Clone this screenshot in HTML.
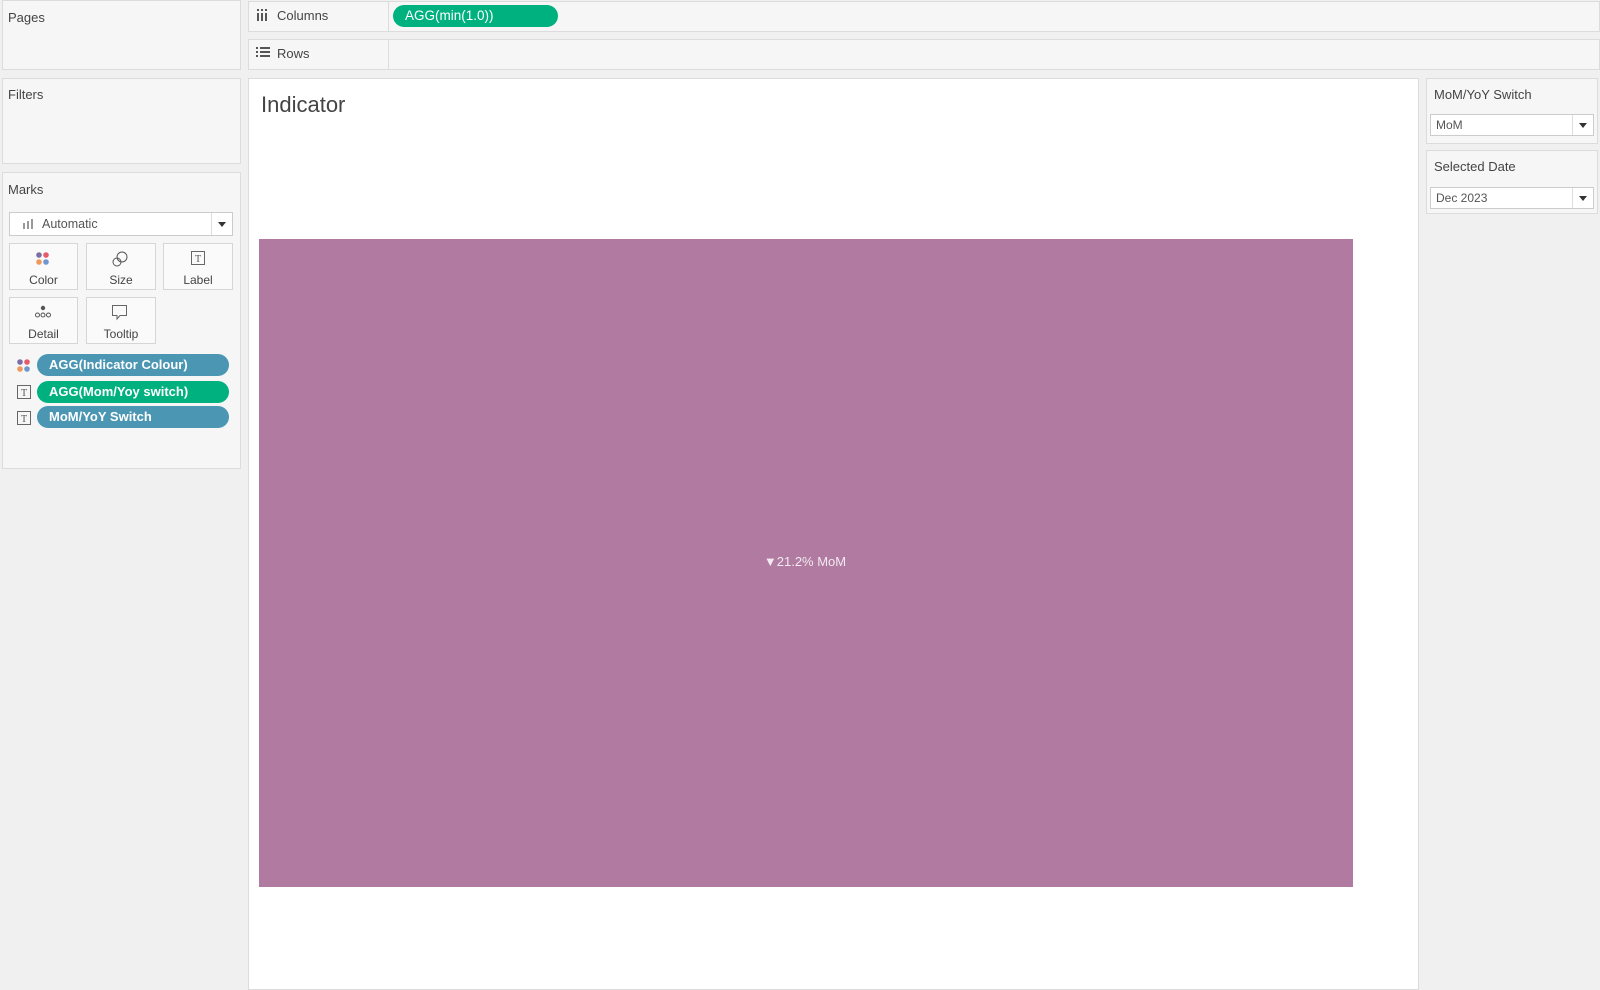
<!DOCTYPE html>
<html><head><style>
*{box-sizing:border-box;margin:0;padding:0}
body{width:1600px;height:988px;background:#f0f0f0;font-family:"Liberation Sans",sans-serif;color:#333;position:relative;overflow:hidden;font-size:13px}
.p{position:absolute;background:#f6f6f6;border:1px solid #dcdcdc}
.t{position:absolute;font-size:13px;color:#444}
.pill{position:absolute;border-radius:11px;color:#fff;font-weight:bold;font-size:13px;padding-left:12px;line-height:22px}
.btn{position:absolute;background:#fafafa;border:1px solid #d6d6d6;text-align:center;font-size:12px;color:#444}
.dd{position:absolute;background:#fff;border:1px solid #ccc;font-size:12px;color:#555;padding-left:5px;line-height:20px}
.dd:after{content:"";position:absolute;right:0;top:0;width:20px;height:100%;border-left:1px solid #ddd}
.arr{position:absolute;right:6px;top:8px;width:0;height:0;border-left:4px solid transparent;border-right:4px solid transparent;border-top:5px solid #333}
</style></head><body>
<div class="p" style="left:2px;top:0;width:239px;height:70px"></div>
<div class="t" style="left:8px;top:10px">Pages</div>
<div class="p" style="left:2px;top:78px;width:239px;height:86px"></div>
<div class="t" style="left:8px;top:87px">Filters</div>
<div class="p" style="left:2px;top:172px;width:239px;height:297px"></div>
<div class="t" style="left:8px;top:182px">Marks</div>
<div class="dd" style="left:9px;top:212px;width:224px;height:24px;line-height:22px;padding-left:32px;font-size:12.5px">Automatic<span class="arr" style="top:9px"></span></div>
<svg style="position:absolute;left:22px;top:218px" width="12" height="12"><rect x="1" y="5" width="2" height="6" fill="#999"/><rect x="5" y="3" width="2" height="8" fill="#999"/><rect x="9" y="1" width="2" height="10" fill="#999"/></svg>
<div class="btn" style="left:9px;top:243px;width:69px;height:47px;padding-top:29px">Color</div>
<svg style="position:absolute;left:35px;top:251px" width="16" height="16"><circle cx="4" cy="4" r="2.8" fill="#7b6ea6"/><circle cx="11" cy="4" r="2.8" fill="#e55b6a"/><circle cx="4" cy="11" r="2.8" fill="#f09a5a"/><circle cx="11" cy="11" r="2.8" fill="#6f96cf"/></svg>
<div class="btn" style="left:86px;top:243px;width:70px;height:47px;padding-top:29px">Size</div>
<svg style="position:absolute;left:111px;top:250px" width="18" height="18"><circle cx="11" cy="7" r="5" fill="none" stroke="#555"/><circle cx="6" cy="12" r="4" fill="none" stroke="#555"/></svg>
<div class="btn" style="left:163px;top:243px;width:70px;height:47px;padding-top:29px">Label</div>
<svg style="position:absolute;left:190px;top:250px" width="16" height="16"><rect x="1.5" y="1.5" width="13" height="13" fill="none" stroke="#666"/><text x="8" y="12" font-size="10" text-anchor="middle" fill="#555" font-family="Liberation Serif">T</text></svg>
<div class="btn" style="left:9px;top:297px;width:69px;height:47px;padding-top:29px">Detail</div>
<svg style="position:absolute;left:34px;top:305px" width="18" height="14"><circle cx="9" cy="3" r="2.2" fill="#555"/><circle cx="3.5" cy="10" r="2" fill="none" stroke="#555"/><circle cx="9" cy="10" r="2" fill="none" stroke="#555"/><circle cx="14.5" cy="10" r="2" fill="none" stroke="#555"/></svg>
<div class="btn" style="left:86px;top:297px;width:70px;height:47px;padding-top:29px">Tooltip</div>
<svg style="position:absolute;left:111px;top:304px" width="18" height="18"><path d="M1.5 1.5H15.5V11.5H9L6 15V11.5H1.5Z" fill="none" stroke="#666"/></svg>
<svg style="position:absolute;left:16px;top:358px" width="16" height="16"><circle cx="4" cy="4" r="2.8" fill="#7b6ea6"/><circle cx="11" cy="4" r="2.8" fill="#e55b6a"/><circle cx="4" cy="11" r="2.8" fill="#f09a5a"/><circle cx="11" cy="11" r="2.8" fill="#6f96cf"/></svg>
<div class="pill" style="left:37px;top:354px;width:192px;background:#4a96b3">AGG(Indicator Colour)</div>
<svg style="position:absolute;left:16px;top:384px" width="16" height="16"><rect x="1.5" y="1.5" width="13" height="13" fill="none" stroke="#666"/><text x="8" y="12" font-size="10" text-anchor="middle" fill="#555" font-family="Liberation Serif">T</text></svg>
<div class="pill" style="left:37px;top:381px;width:192px;background:#00b180">AGG(Mom/Yoy switch)</div>
<svg style="position:absolute;left:16px;top:410px" width="16" height="16"><rect x="1.5" y="1.5" width="13" height="13" fill="none" stroke="#666"/><text x="8" y="12" font-size="10" text-anchor="middle" fill="#555" font-family="Liberation Serif">T</text></svg>
<div class="pill" style="left:37px;top:406px;width:192px;background:#4a96b3">MoM/YoY Switch</div>

<div class="p" style="left:248px;top:1px;width:1352px;height:31px"></div>
<div style="position:absolute;left:388px;top:1px;width:1px;height:31px;background:#dcdcdc"></div>
<svg style="position:absolute;left:256px;top:9px" width="14" height="14"><rect x="1" y="4" width="2" height="8" fill="#555"/><rect x="5" y="4" width="2" height="8" fill="#555"/><rect x="9" y="4" width="2" height="8" fill="#555"/><rect x="1" y="0" width="2" height="2" fill="#555"/><rect x="5" y="0" width="2" height="2" fill="#555"/><rect x="9" y="0" width="2" height="2" fill="#555"/></svg>
<div class="t" style="left:277px;top:8px">Columns</div>
<div class="pill" style="left:393px;top:5px;width:165px;background:#00b180;font-weight:normal;font-size:13.5px">AGG(min(1.0))</div>
<div class="p" style="left:248px;top:39px;width:1352px;height:31px"></div>
<div style="position:absolute;left:388px;top:39px;width:1px;height:31px;background:#dcdcdc"></div>
<svg style="position:absolute;left:256px;top:47px" width="14" height="12"><g fill="#555"><rect x="0" y="0" width="2" height="2"/><rect x="4" y="0" width="10" height="2"/><rect x="0" y="4" width="2" height="2"/><rect x="4" y="4" width="10" height="2"/><rect x="0" y="8" width="2" height="2"/><rect x="4" y="8" width="10" height="2"/></g></svg>
<div class="t" style="left:277px;top:46px">Rows</div>

<div style="position:absolute;left:248px;top:78px;width:1171px;height:912px;background:#fff;border:1px solid #dcdcdc"></div>
<div style="position:absolute;left:261px;top:92px;font-size:22px;color:#444;font-weight:300">Indicator</div>
<div style="position:absolute;left:259px;top:239px;width:1094px;height:648px;background:#b07aa1"></div>
<div style="position:absolute;left:705px;top:554px;width:200px;text-align:center;color:#f2eaf0;font-size:13px">▼21.2% MoM</div>

<div class="p" style="left:1426px;top:78px;width:172px;height:66px"></div>
<div class="t" style="left:1434px;top:87px">MoM/YoY Switch</div>
<div class="dd" style="left:1430px;top:114px;width:164px;height:22px">MoM<span class="arr"></span></div>
<div class="p" style="left:1426px;top:150px;width:172px;height:64px"></div>
<div class="t" style="left:1434px;top:159px">Selected Date</div>
<div class="dd" style="left:1430px;top:187px;width:164px;height:22px">Dec 2023<span class="arr"></span></div>
</body></html>
